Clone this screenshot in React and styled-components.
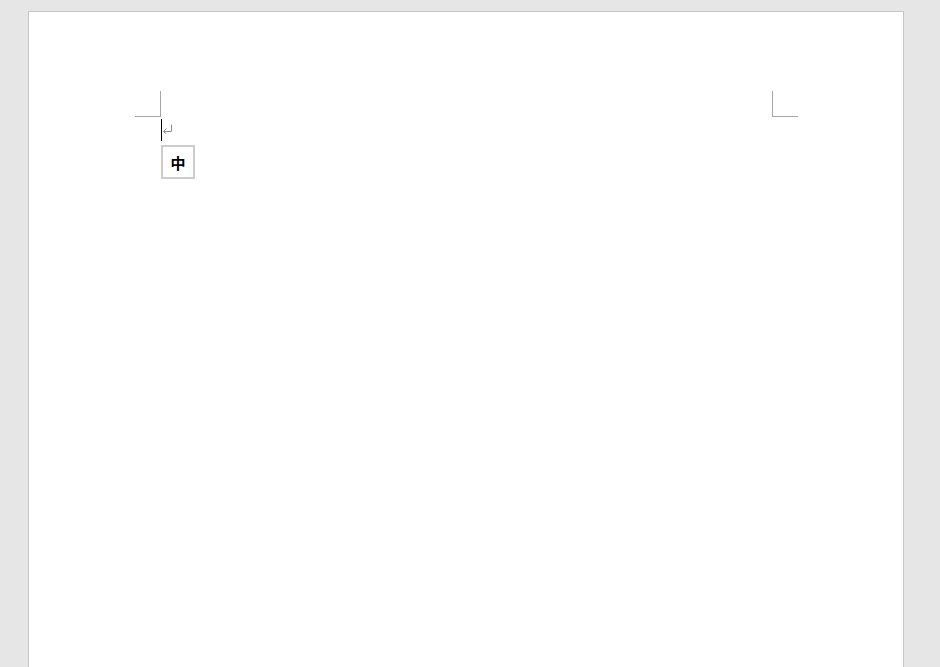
import React from "react";
import styled, {createGlobalStyle} from "styled-components";

const GlobalStyle = createGlobalStyle`
  html, body {
    margin: 0;
    padding: 0;
    background: #e6e6e6;
    overflow: hidden;
    font-family: "Noto Sans CJK SC", "Noto Sans", sans-serif;
  }
`;

const Workspace = styled.div`
  height: 667px;
  padding: 11px 0 0 28px;
  box-sizing: border-box;
`;

const Page = styled.div`
  width: 874px;
  height: 720px;
  background: #ffffff;
  border: 1px solid #c6c6c6;
  padding-top: 79px;
  box-sizing: content-box;
`;

const MarginRow = styled.div`
  display: flex;
  justify-content: space-between;
  padding-left: 106px;
  width: 663px;
`;

const CornerMark = styled.div`
  width: 25px;
  height: 25px;
  border-bottom: 1px solid #a6a6a6;
  border-${(p) => (p.$side === "left" ? "right" : "left")}: 1px solid #a6a6a6;
`;

const Body = styled.div`
  display: flex;
  flex-direction: column;
  align-items: flex-start;
  padding: 2px 0 0 132px;
`;

const Line = styled.div`
  display: flex;
  align-items: flex-start;
  height: 23px;
`;

const Caret = styled.div`
  width: 1px;
  height: 22px;
  background: #000000;
`;

const ReturnMark = styled.svg`
  margin-top: 5px;
  display: block;
`;

const ImeBox = styled.div`
  width: 30px;
  height: 30px;
  margin-top: 3px;
  border: 2px solid #cccccc;
  display: flex;
  align-items: center;
  justify-content: center;
  font-size: 15px;
  font-weight: 700;
  color: #000000;
  line-height: 1;
`;

const App = () => {
    return (
        <>
            <GlobalStyle/>
            <Workspace>
                <Page>
                    <MarginRow>
                        <CornerMark $side="left"/>
                        <CornerMark $side="right"/>
                    </MarginRow>
                    <Body>
                        <Line>
                            <Caret/>
                            <ReturnMark width="11" height="10" viewBox="0 0 11 10">
                                <path d="M9.5 0.5 V7.5 H1.5 M4.5 4.5 L1.5 7.5 L4.5 10" fill="none" stroke="#8c8c8c" strokeWidth="1"/>
                            </ReturnMark>
                        </Line>
                        <ImeBox>中</ImeBox>
                    </Body>
                </Page>
            </Workspace>
        </>
    );
};

export default App;
